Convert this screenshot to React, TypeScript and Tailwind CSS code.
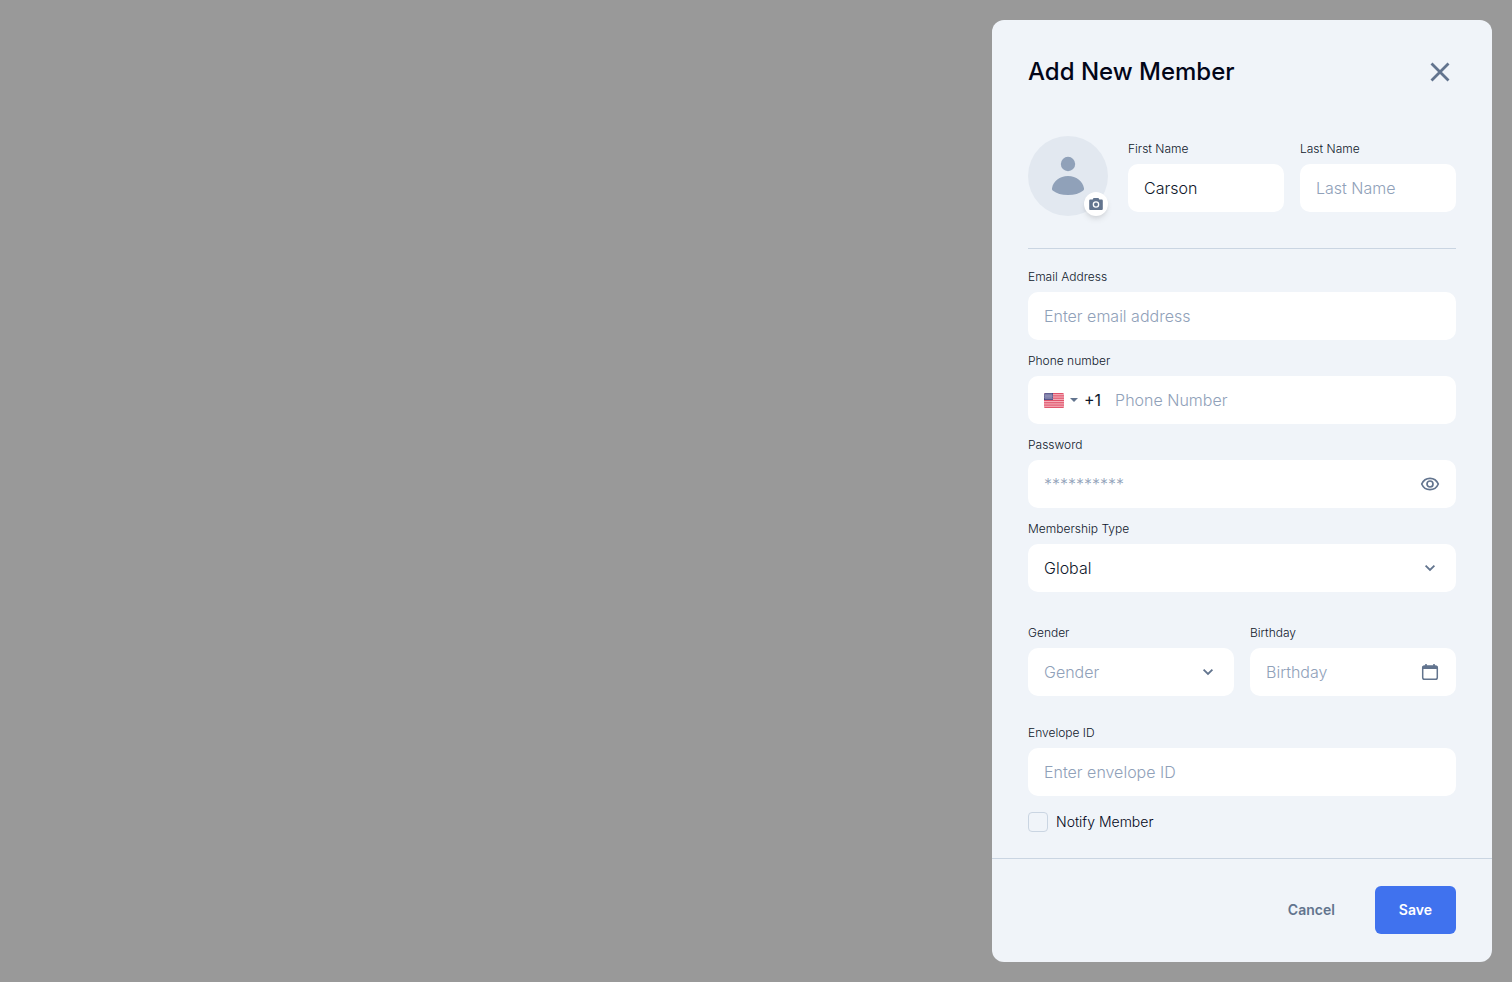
import React, { useState } from "react";

const inputClass = "w-full h-12 rounded-[10px] bg-white px-4 text-[16px] font-light text-slate-900 placeholder:text-slate-400 placeholder:opacity-100 outline-none";

type FieldProps = {
	id: string;
	label: string;
	children: React.ReactNode;
};

const Field = ({ id, label, children }: FieldProps) => (
	<div className="flex min-w-0 flex-1 flex-col gap-1.5">
		<label htmlFor={id} className="text-xs leading-[18px] font-light text-slate-900">{label}</label>
		<div className="relative flex items-center">{children}</div>
	</div>
);

const Chevron = () => (
	<svg className="pointer-events-none absolute right-4 size-5 text-slate-500" viewBox="0 0 20 20" fill="none" stroke="currentColor" strokeWidth="1.8">
		<path d="M5.6 7.6 10 12l4.4-4.4" />
	</svg>
);

const Flag = () => (
	<svg className="h-[15px] w-5" viewBox="0 0 20 15">
		<clipPath id="flag-clip"><rect width="20" height="15" rx="1.5" /></clipPath>
		<g clipPath="url(#flag-clip)">
			<rect width="20" height="15" fill="#f5b5bf" />
			{[0, 1, 2, 3, 4, 5, 6].map((i) => (
				<rect key={i} y={i * 2.3} width="20" height="1.15" fill="#e0526a" />
			))}
			<rect width="9" height="7" fill="#46467f" />
			{[1, 2.9, 4.8].map((y) => [1, 3, 5, 7].map((x) => (
				<g key={`${x}-${y}`} fill="#d5d5e8">
					<circle cx={x} cy={y} r="0.55" />
					<circle cx={x + 1} cy={y + 0.95} r="0.55" />
				</g>
			)))}
		</g>
	</svg>
);

const Avatar = () => (
	<div className="relative size-20 shrink-0 rounded-full bg-slate-200">
		<svg className="size-20 text-slate-400" viewBox="0 0 80 80" fill="currentColor">
			<circle cx="40" cy="28" r="7.2" />
			<path d="M24 52.2C25.4 45 31.6 40 40 40s14.6 5 16 12.2c.2 1-.2 1.9-1 2.5C51.5 57.4 46.5 59 40 59s-11.5-1.6-15-4.3c-.8-.6-1.2-1.5-1-2.5z" />
		</svg>
		<button type="button" aria-label="Upload photo" className="absolute right-0 bottom-0 grid size-6 place-content-center rounded-full bg-white text-slate-500 shadow-md">
			<svg className="size-4" viewBox="0 0 16 16" fill="currentColor">
				<path fillRule="evenodd" d="M5.5 2h5l.8 1.5h2.2c.8 0 1.3.5 1.3 1.3v7.9c0 .8-.5 1.3-1.3 1.3h-11c-.8 0-1.3-.5-1.3-1.3V4.8c0-.8.5-1.3 1.3-1.3h2.2zM8 5.2a3.3 3.3 0 1 0 0 6.6 3.3 3.3 0 0 0 0-6.6zm0 1.3a2 2 0 1 1 0 4 2 2 0 0 1 0-4z" />
			</svg>
		</button>
	</div>
);

const App = () => {
	const [firstName, setFirstName] = useState("Carson");
	const [showPassword, setShowPassword] = useState(false);
	const [gender, setGender] = useState("");

	return (
		<div className="flex h-screen justify-end bg-[#999999] p-5 font-['Inter',sans-serif]">
			<form className="flex w-full max-w-[500px] flex-col overflow-hidden rounded-xl bg-[#f0f4f9]" onSubmit={(e) => e.preventDefault()}>
				<div className="flex-1 overflow-y-auto px-9 pt-9">
					<div className="flex items-center justify-between">
						<h1 className="text-2xl font-medium text-slate-950">Add New Member</h1>
						<button type="button" aria-label="Close" className="text-slate-500">
							<svg className="size-8" viewBox="0 0 32 32" fill="none" stroke="currentColor" strokeWidth="2.8">
								<path d="M7.5 7.5l17 17M24.5 7.5l-17 17" />
							</svg>
						</button>
					</div>

					<div className="mt-12 flex items-center gap-5 border-b border-slate-300 pb-8">
						<Avatar />
						<div className="flex min-w-0 flex-1 gap-4">
							<Field id="firstName" label="First Name">
								<input id="firstName" className={inputClass} value={firstName} onChange={(e) => setFirstName(e.target.value)} />
							</Field>
							<Field id="lastName" label="Last Name">
								<input id="lastName" className={inputClass} placeholder="Last Name" />
							</Field>
						</div>
					</div>

					<div className="mt-[19px] flex flex-col gap-3">
						<Field id="email" label="Email Address">
							<input id="email" type="email" className={inputClass} placeholder="Enter email address" />
						</Field>
						<Field id="phone" label="Phone number">
							<div className="flex h-12 w-full items-center rounded-[10px] bg-white px-4">
								<div className="relative flex items-center gap-1.5">
									<Flag />
									<svg className="h-1 w-2 text-slate-500" viewBox="0 0 8 4" fill="currentColor"><path d="M0 0h8L4 4z" /></svg>
									<select aria-label="Country code" className="absolute inset-0 w-full opacity-0">
										<option value="us">+1</option>
									</select>
								</div>
								<span className="ml-1.5 text-[16px] text-slate-900">+1</span>
								<input id="phone" type="tel" className="ml-3.5 min-w-0 flex-1 text-[16px] font-light text-slate-900 outline-none placeholder:text-slate-400" placeholder="Phone Number" />
							</div>
						</Field>
						<Field id="password" label="Password">
							<input id="password" type={showPassword ? "text" : "password"} className={inputClass} placeholder="**********" />
							<button type="button" aria-label="Show password" className="absolute right-4 text-slate-500" onClick={() => setShowPassword(!showPassword)}>
								<svg className="size-5" viewBox="0 0 20 20" fill="none" stroke="currentColor" strokeWidth="1.7">
									<path d="M1.7 10C3.3 6.3 6.3 4.3 10 4.3s6.7 2 8.3 5.7c-1.6 3.7-4.6 5.7-8.3 5.7S3.3 13.7 1.7 10z" strokeLinejoin="round" />
									<circle cx="10" cy="10" r="3" />
								</svg>
							</button>
						</Field>
						<Field id="membership" label="Membership Type">
							<select id="membership" className={`${inputClass} appearance-none`}>
								<option>Global</option>
							</select>
							<Chevron />
						</Field>
					</div>

					<div className="mt-8 flex gap-4">
						<Field id="gender" label="Gender">
							<select id="gender" value={gender} onChange={(e) => setGender(e.target.value)} className={`${inputClass} appearance-none ${gender ? "" : "text-slate-400!"}`}>
								<option value="" hidden>Gender</option>
								<option>Female</option>
								<option>Male</option>
							</select>
							<Chevron />
						</Field>
						<Field id="birthday" label="Birthday">
							<input id="birthday" className={inputClass} placeholder="Birthday" />
							<button type="button" aria-label="Open calendar" className="absolute right-4 text-slate-500">
								<svg className="size-5" viewBox="0 0 20 20" fill="none" stroke="currentColor" strokeWidth="1.5">
									<rect x="2.7" y="4" width="14.6" height="13.3" rx="1.8" />
									<path d="M2.7 5.5h14.6" strokeWidth="3" />
									<path d="M6 2v3M14 2v3" strokeWidth="1.6" />
								</svg>
							</button>
						</Field>
					</div>

					<div className="mt-7 flex flex-col gap-4">
						<Field id="envelope" label="Envelope ID">
							<input id="envelope" className={inputClass} placeholder="Enter envelope ID" />
						</Field>
						<div className="flex items-center gap-2">
							<input id="notify" type="checkbox" className="size-5 appearance-none rounded border border-slate-300 checked:bg-[#4072ee]" />
							<label htmlFor="notify" className="text-sm font-light text-slate-950">Notify Member</label>
						</div>
					</div>
				</div>

				<div className="flex justify-end gap-4 border-t border-slate-300 px-9 pt-[27px] pb-7">
					<button type="button" className="h-12 rounded-md px-6 text-sm font-semibold text-slate-500">Cancel</button>
					<button type="submit" className="h-12 rounded-md bg-[#4072ee] px-6 text-sm font-semibold text-white">Save</button>
				</div>
			</form>
		</div>
	);
};

export default App;
